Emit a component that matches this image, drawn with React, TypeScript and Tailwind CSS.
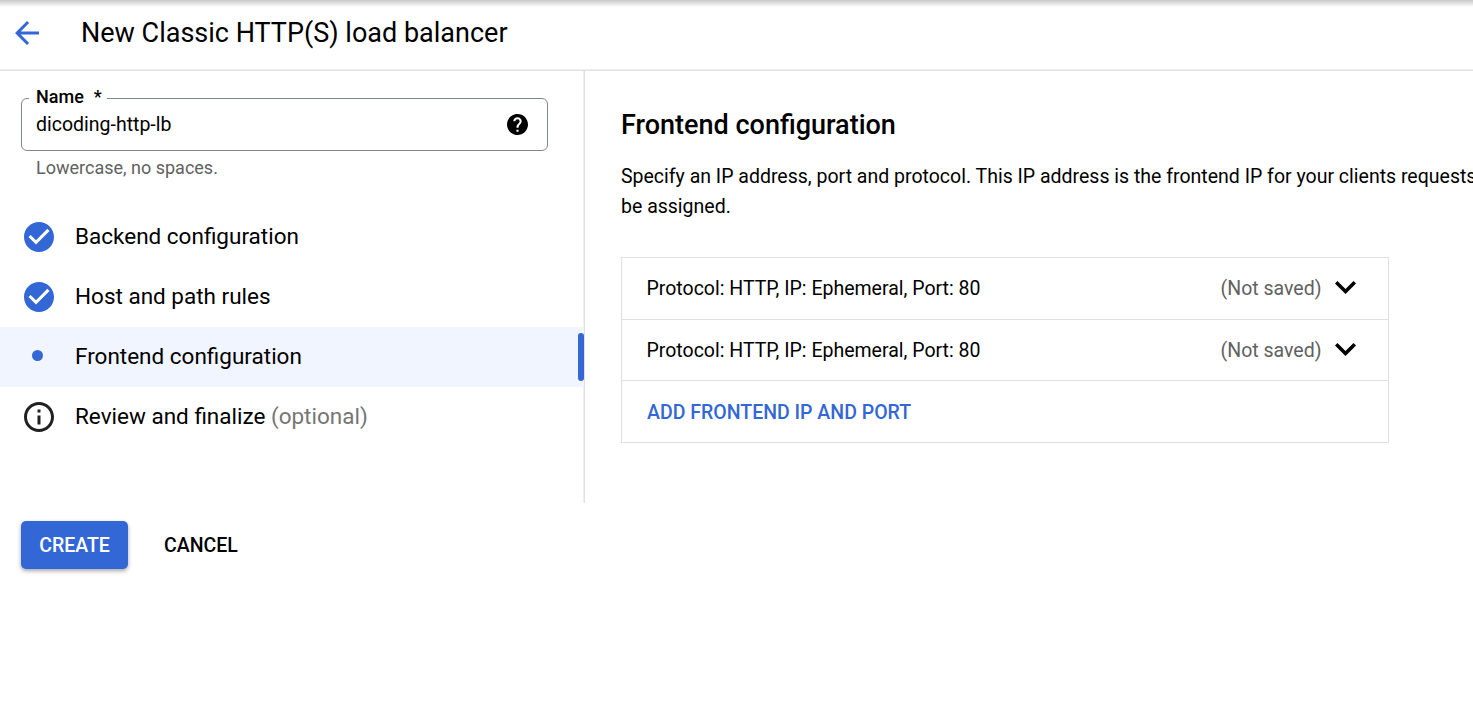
import React from "react";

function CheckIcon() {
  return (
    <svg viewBox="2 2 20 20" className="block size-[30px] fill-[#3367d6]">
      <path d="M12 2C6.48 2 2 6.48 2 12s4.48 10 10 10 10-4.48 10-10S17.52 2 12 2zm-2 15l-5-5 1.41-1.41L10 14.17l7.59-7.59L19 8l-9 9z" />
    </svg>
  );
}

function InfoIcon() {
  return (
    <svg viewBox="2 2 20 20" className="block size-[30px] fill-[#212121]">
      <path d="M11 7h2v2h-2zm0 4h2v6h-2zm1-9C6.48 2 2 6.48 2 12s4.48 10 10 10 10-4.48 10-10S17.52 2 12 2zm0 18c-4.41 0-8-3.59-8-8s3.59-8 8-8 8 3.59 8 8-3.59 8-8 8z" />
    </svg>
  );
}

function Chevron() {
  return (
    <svg viewBox="6 8.59 12 7.41" className="mb-0.5 ml-[14px] block h-[13px] w-[21px] fill-black">
      <path d="M16.59 8.59L12 13.17 7.41 8.59 6 10l6 6 6-6z" />
    </svg>
  );
}

function Step({ icon, children, active = false }: { icon: React.ReactNode; children: React.ReactNode; active?: boolean }) {
  return (
    <li className={active ? "flex h-[60px] items-center bg-[#f0f5ff]" : "flex h-[60px] items-center"}>
      <span className="ml-6 flex w-[51px] items-center">{icon}</span>
      <span className="mb-0.5 text-[22.5px] leading-[30px] whitespace-nowrap">{children}</span>
      {active && <span className="ml-auto h-12 w-1.5 rounded-[3px] bg-[#3367d6]" />}
    </li>
  );
}

function FrontendRow({ className }: { className: string }) {
  return (
    <div className={`flex items-center border-b border-[#e0e0e0] pr-8 pl-[24.5px] leading-[30px] ${className}`}>
      <span>Protocol: HTTP, IP: Ephemeral, Port: 80</span>
      <span className="-mr-[0.5px] ml-auto text-[#616161]">(Not saved)</span>
      <Chevron />
    </div>
  );
}

export default function App() {
  return (
    <div className="h-[702px] w-full overflow-hidden bg-white font-['Roboto',sans-serif] text-[19.5px] text-black">
      <div className="h-[71px] bg-linear-to-b from-[#c8c8c8] to-white to-[7px] bg-no-repeat">
        <header className="flex h-[71px] items-center border-b border-[#e0e0e0] pb-1 pl-[9px] shadow-[inset_0_-1px_0_#f0f0f0]">
          <svg viewBox="0 0 24 24" className="size-9 fill-[#3367d6]">
            <path d="M20 11H7.83l5.59-5.59L12 4l-8 8 8 8 1.41-1.41L7.83 13H20v-2z" />
          </svg>
          <h1 className="ml-9 text-[27px] leading-9">New Classic HTTP(S) load balancer</h1>
        </header>
      </div>

      <div className="flex h-[432px]">
        <aside className="w-[585px] shrink-0 border-r border-[#e0e0e0] pt-[27px] shadow-[inset_-1px_0_0_#f0f0f0]">
          <div className="relative ml-[21px] flex h-[53px] w-[527px] items-center justify-between rounded-[6px] border border-[#80868b] pr-[19px] pl-[14px]">
            <label className="absolute -top-[13px] left-[7px] flex bg-white pr-[5px] pl-[7px] text-[18px] leading-[21px] font-medium">
              Name<span className="ml-[10px]">*</span>
            </label>
            <span>dicoding-http-lb</span>
            <svg viewBox="2 2 20 20" className="size-[21px] fill-black">
              <path d="M12 2C6.48 2 2 6.48 2 12s4.48 10 10 10 10-4.48 10-10S17.52 2 12 2zm1 17h-2v-2h2v2zm2.07-7.75l-.9.92C13.45 12.9 13 13.5 13 15h-2v-.5c0-1.1.45-2.1 1.17-2.83l1.24-1.26c.37-.36.59-.86.59-1.41 0-1.1-.9-2-2-2s-2 .9-2 2H8c0-2.21 1.79-4 4-4s4 1.79 4 4c0 .88-.36 1.68-.93 2.25z" />
            </svg>
          </div>
          <p className="mt-[5px] ml-9 text-[18px] leading-6 text-[#616161]">Lowercase, no spaces.</p>
          <ul className="mt-[27px]">
            <Step icon={<CheckIcon />}>Backend configuration</Step>
            <Step icon={<CheckIcon />}>Host and path rules</Step>
            <Step active icon={<span className="mb-[3px] ml-2 size-[11px] rounded-full bg-[#3367d6]" />}>
              Frontend configuration
            </Step>
            <Step icon={<InfoIcon />}>
              Review and finalize <span className="text-[#757575]">(optional)</span>
            </Step>
          </ul>
        </aside>

        <main className="min-w-0 flex-1 overflow-hidden pt-9 pl-9">
          <h2 className="text-[27px] leading-9 font-medium">Frontend configuration</h2>
          <p className="mt-[19px] leading-[30px] whitespace-nowrap">
            Specify an IP address, port and protocol. This IP address is the frontend IP for your clients requests
            <br />
            be assigned.
          </p>
          <section className="mt-[35px] h-[186px] w-[768px] border border-[#e0e0e0]">
            <FrontendRow className="h-[62px]" />
            <FrontendRow className="h-[61px] pt-px" />
            <div className="flex h-[61px] items-center pt-0.5 pl-[25px]">
              <button className="leading-[30px] font-medium text-[#3367d6]">ADD FRONTEND IP AND PORT</button>
            </div>
          </section>
        </main>
      </div>

      <footer className="mt-[18px] ml-[21px] flex items-center leading-6 font-medium">
        <button className="h-12 w-[107px] rounded-[5px] bg-[#3367d6] pt-0.5 text-white shadow-[0_2px_4px_rgba(0,0,0,0.35)]">CREATE</button>
        <button className="ml-9 pt-0.5">CANCEL</button>
      </footer>
    </div>
  );
}
